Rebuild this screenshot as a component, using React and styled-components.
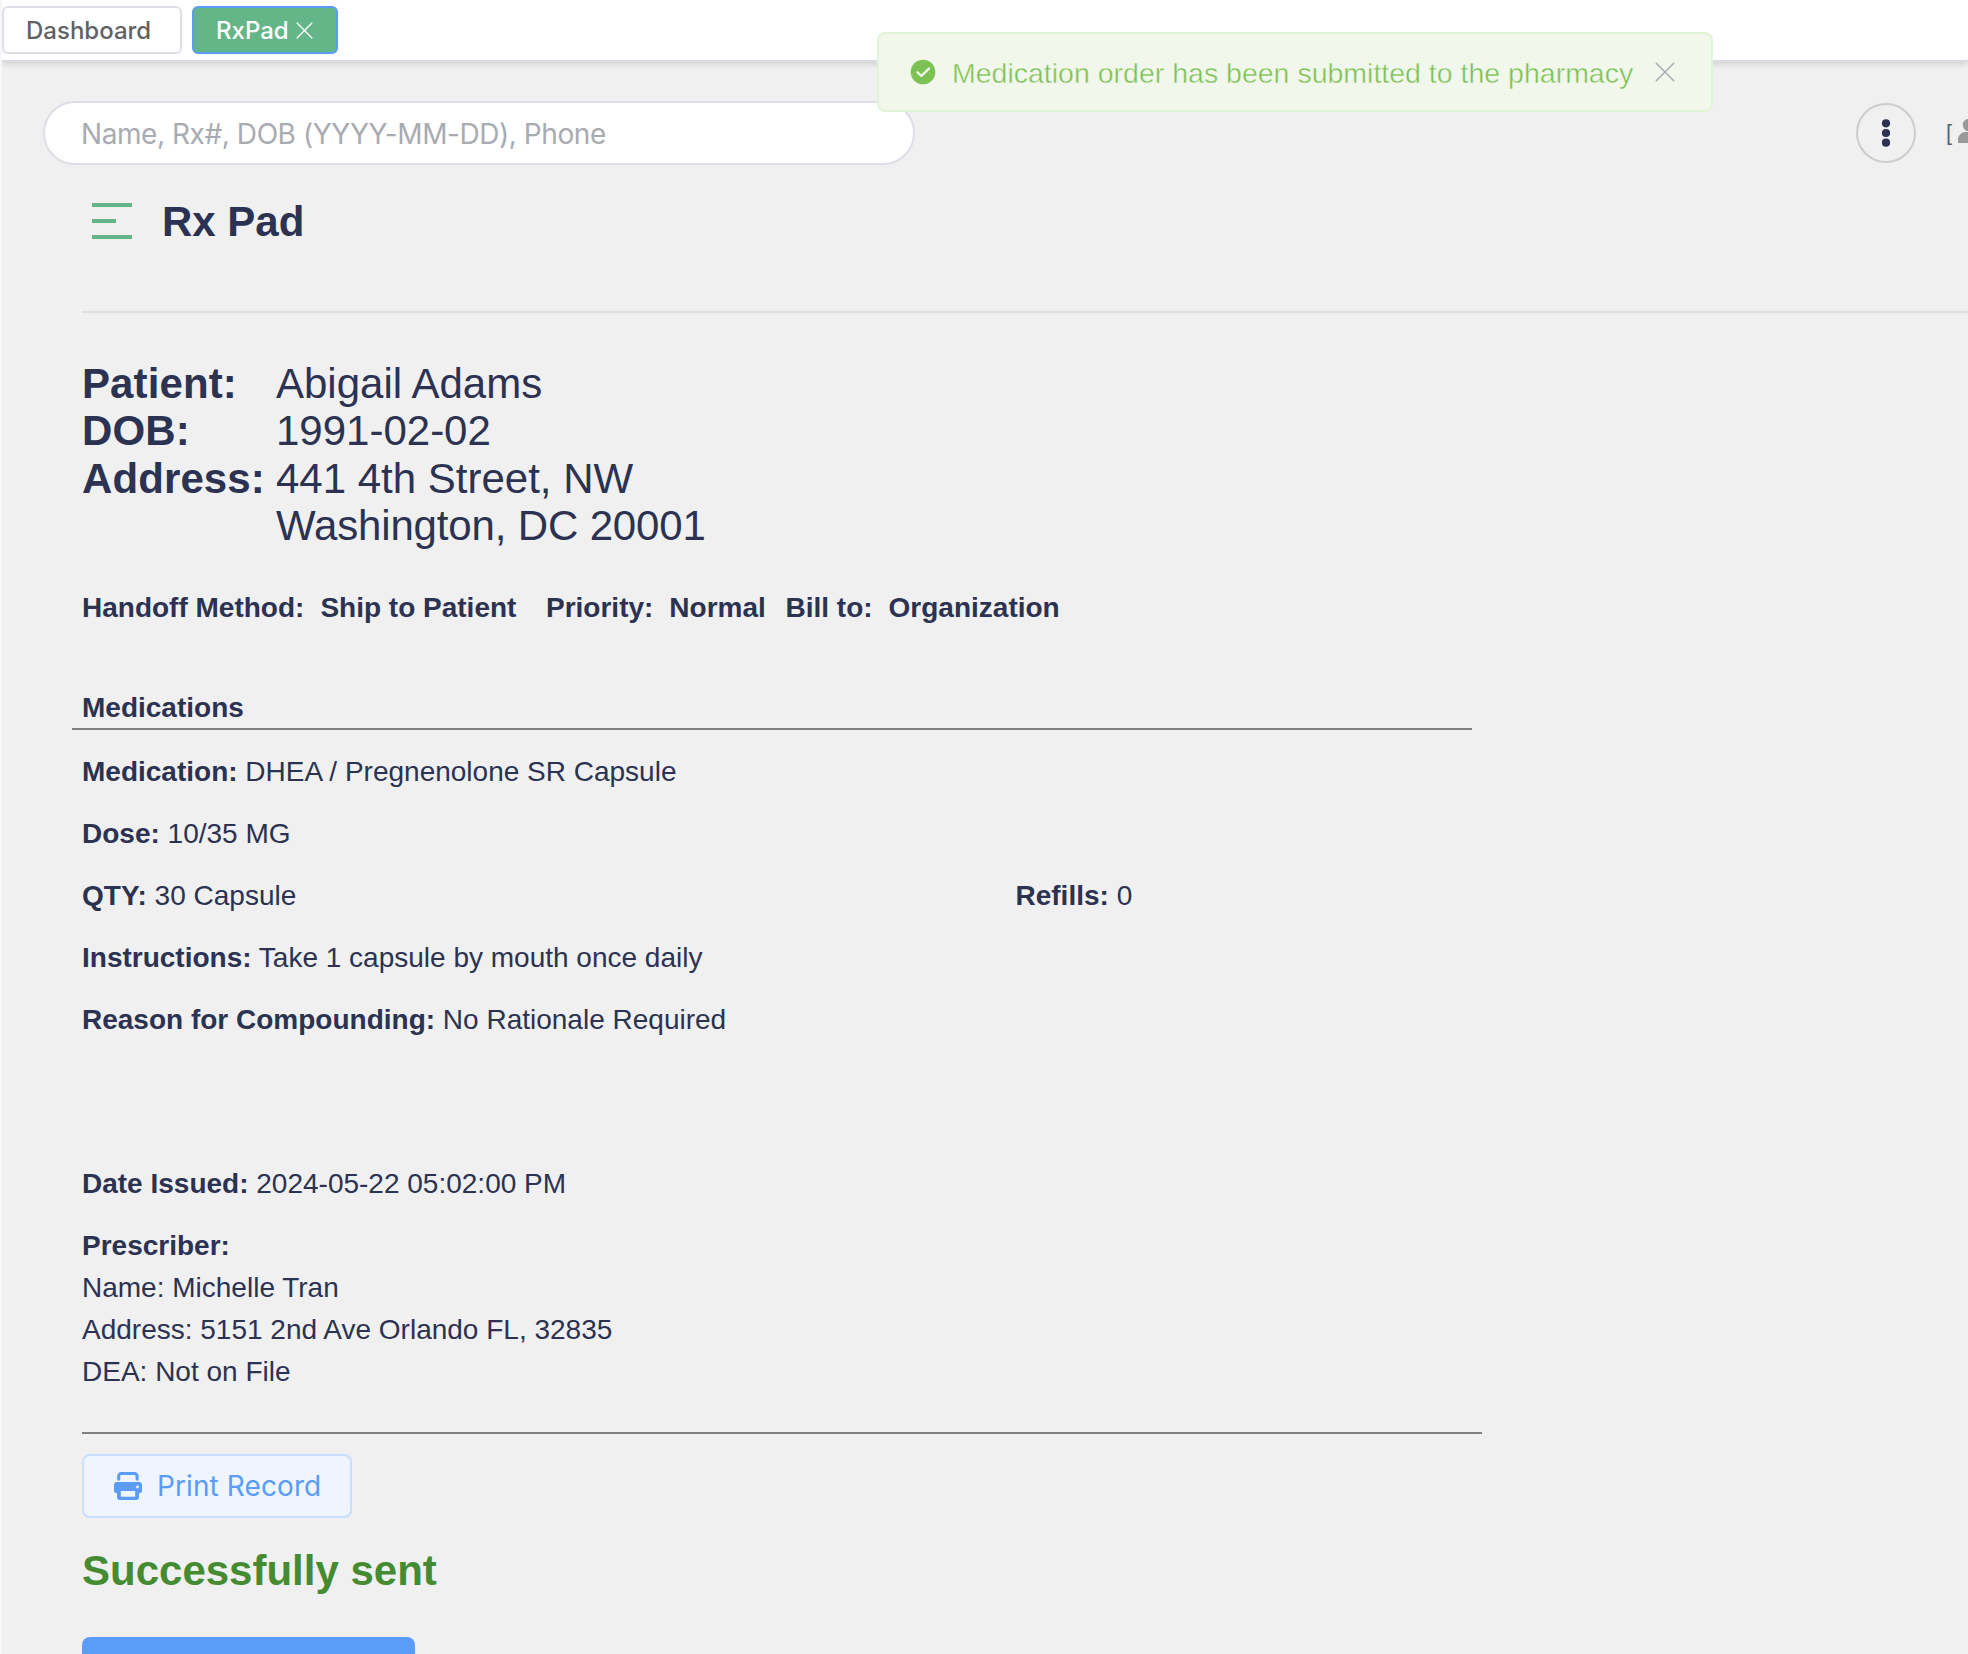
import React from "react";
import styled, { createGlobalStyle } from "styled-components";

const helvetica = `"Liberation Sans", Arial, sans-serif`;
const ui = `Inter, "Liberation Sans", sans-serif`;
const navy = "#2b3252";

const GlobalStyle = createGlobalStyle`
  *, *::before, *::after { box-sizing: border-box; }
  body { margin: 0; background: #f0f0f0; overflow: hidden; }
  h1, h2, p, dl, dd, dt { margin: 0; }
`;

const Page = styled.div`
  position: relative;
  height: 1654px;
  overflow: hidden;
  border-left: 2px solid #f7f7f7;
  background: #f0f0f0;
  color: ${navy};
  font-family: ${helvetica};
  font-size: 28px;
  line-height: 42px;
`;

const TabBar = styled.nav`
  display: flex;
  gap: 10px;
  height: 62px;
  padding-top: 6px;
  background: #fff;
  border-bottom: 2px solid #d8dce5;
  box-shadow: 0 2px 6px rgba(0, 0, 0, 0.14);
`;

const Tab = styled.button`
  display: flex;
  align-items: center;
  gap: 7px;
  width: ${(p) => p.$width}px;
  height: 48px;
  padding: 0 0 0 22px;
  border: 2px solid ${(p) => (p.$active ? "#5a9cf8" : "#dcdfe6")};
  border-radius: 6px;
  background: ${(p) => (p.$active ? "#64b587" : "#fff")};
  color: ${(p) => (p.$active ? "#fff" : "#606266")};
  font: 450 24px ${ui};
`;

const Toast = styled.div`
  position: absolute;
  z-index: 2;
  top: 32px;
  left: 875px;
  display: flex;
  align-items: center;
  width: 836px;
  height: 80px;
  padding-left: 31px;
  border: 2px solid #e1f3d8;
  border-radius: 8px;
  background: #f2f7ec;
  color: #7cc153;
`;

/* A background-coloured stroke trims the glyph stems down to a light weight. */
const ToastText = styled.span`
  width: 680px;
  margin: 0 23px 0 16px;
  padding-top: 1px;
  font-size: 28.5px;
  -webkit-text-stroke: 0.45px #f2f7ec;
  white-space: nowrap;
`;

const SearchRow = styled.div`
  display: flex;
  align-items: center;
  height: 64px;
  margin: 39px 0 0 41px;
`;

const Search = styled.input`
  flex-shrink: 0;
  width: 872px;
  height: 64px;
  padding: 1px 36px 0;
  border: 2px solid #dcdfe6;
  border-radius: 32px;
  background: #fff;
  font: 400 28px ${ui};
  letter-spacing: -0.43px;
  &::placeholder { color: #a8abb2; opacity: 1; }
`;

const MoreButton = styled.button`
  display: grid;
  flex-shrink: 0;
  place-items: center;
  width: 60px;
  height: 60px;
  margin-left: 941px;
  padding: 0;
  border: 2px solid #ccc;
  border-radius: 50%;
  background: transparent;
`;

const Account = styled.div`
  display: flex;
  align-items: center;
  gap: 6px;
  flex-shrink: 0;
  margin-left: 30px;
  color: #5a6478;
  font-size: 22px;
`;

const Header = styled.header`
  display: flex;
  align-items: center;
  gap: 30px;
  height: 148px;
  margin-left: 80px;
  padding: 0 0 34px 10px;
  border-bottom: 2px solid #dcdfe6;
`;

const Title = styled.h1`
  padding-top: 2px;
  font-size: 42px;
  line-height: 48px;
  font-weight: 700;
`;

const Content = styled.main`
  padding: 47px 0 0 80px;
`;

const Patient = styled.dl`
  display: grid;
  grid-template-columns: 194px 1fr;
  font-size: 42px;
  line-height: 47.4px;
  white-space: nowrap;
`;

const Label = styled.dt`
  font-weight: 700;
  letter-spacing: 0.1px;
`;

const Value = styled.dd`
  letter-spacing: 0;
`;

const AddressLine = styled.div`
  letter-spacing: ${(p) => p.$tracking || 0}px;
`;

const Summary = styled.div`
  display: flex;
  margin-top: 37px;
  font-weight: 700;
`;

const SummaryItem = styled.div`
  display: flex;
  gap: 16px;
  width: ${(p) => p.$width}px;
  white-space: nowrap;
`;

const SectionTitle = styled.h2`
  width: 1400px;
  height: 52px;
  margin: 49px 0 0 -10px;
  padding: 9px 0 0 10px;
  border-bottom: 2px solid #808080;
  font-size: 28px;
  line-height: 42px;
`;

const Details = styled.div`
  display: grid;
  grid-template-columns: 933.5px 1fr;
  row-gap: 20px;
  padding-top: 21px;
`;

const Field = styled.p`
  grid-column: ${(p) => (p.$half ? "auto" : "1 / -1")};
  white-space: nowrap;
`;

const Signature = styled.section`
  width: 1400px;
  height: 271px;
  margin-top: 122px;
  border-bottom: 2px solid #808080;
`;

const Prescriber = styled.div`
  padding-top: 20px;
`;

const PrintButton = styled.button`
  display: flex;
  align-items: center;
  gap: 15px;
  width: 270px;
  height: 64px;
  margin-top: 20px;
  padding: 0 0 0 30px;
  border: 2px solid #c8dffd;
  border-radius: 8px;
  background: #eef5fe;
  color: #5a9cf8;
  font: 400 28px ${ui};
  letter-spacing: 0.1px;
  white-space: nowrap;
`;

const Sent = styled.p`
  margin-top: 29px;
  color: #458b32;
  font-size: 42px;
  line-height: 48px;
  font-weight: 700;
`;

const NextButton = styled.button`
  display: block;
  width: 333px;
  height: 64px;
  margin-top: 42px;
  border: 0;
  border-radius: 8px;
  background: #5a9cf8;
`;

const Cross = ({ size, stroke }) => (
  <svg width={size} height={size} viewBox="0 0 16 16" fill="none" stroke={stroke} strokeWidth="1.2" strokeLinecap="round">
    <path d="M1 1l14 14M15 1L1 15" />
  </svg>
);

const CheckCircle = () => (
  <svg width="26" height="26" viewBox="0 0 26 26">
    <circle cx="13" cy="13" r="12.3" fill="#7cc153" />
    <path d="M7.5 13.3l3.8 3.7 7.6-7.4" fill="none" stroke="#f2f7ec" strokeWidth="2.4" strokeLinecap="round" strokeLinejoin="round" />
  </svg>
);

const MenuMark = () => (
  <svg width="40" height="36" viewBox="0 0 40 36" fill="#64b587">
    <path d="M0 0h40v4H0zM0 16h24v4H0zM0 32h40v4H0z" />
  </svg>
);

const Dots = () => (
  <svg width="10" height="28" viewBox="0 0 10 28" fill={navy}>
    <circle cx="5" cy="4.3" r="4.1" />
    <circle cx="5" cy="14" r="4.1" />
    <circle cx="5" cy="23.7" r="4.1" />
  </svg>
);

const Person = () => (
  <svg width="24" height="28" viewBox="0 0 24 28" fill="#999">
    <circle cx="11" cy="6" r="6.2" />
    <path d="M0 24v-3.5a7.5 7.5 0 0 1 7.5-7.5h7a7.5 7.5 0 0 1 7.5 7.5V24z" />
  </svg>
);

const Printer = () => (
  <svg width="28" height="28" viewBox="0 0 28 28" fill="none" stroke="#5a9cf8">
    <path d="M4.7 8.6V4.2A2.6 2.6 0 0 1 7.3 1.6h13.2a2.6 2.6 0 0 1 2.6 2.6v4.4" strokeWidth="3" />
    <path fillRule="evenodd" fill="#5a9cf8" stroke="none" d="M3 10h22a3 3 0 0 1 3 3v6a2 2 0 0 1-2 2h-1v4a3 3 0 0 1-3 3H6a3 3 0 0 1-3-3v-4H2a2 2 0 0 1-2-2v-6a3 3 0 0 1 3-3zM6.8 19v5.8h14.4V19zM23.5 13.6a1.4 1.4 0 1 0 0 2.8 1.4 1.4 0 0 0 0-2.8z" />
  </svg>
);

export default function App() {
  return (
    <Page>
      <GlobalStyle />
      <TabBar>
        <Tab $width={180}>Dashboard</Tab>
        <Tab $width={146} $active>
          RxPad
          <Cross size={17} stroke="#fff" />
        </Tab>
      </TabBar>
      <Toast>
        <CheckCircle />
        <ToastText>Medication order has been submitted to the pharmacy</ToastText>
        <Cross size={20} stroke="#a8abb2" />
      </Toast>
      <SearchRow>
        <Search placeholder="Name, Rx#, DOB (YYYY-MM-DD), Phone" />
        <MoreButton aria-label="More">
          <Dots />
        </MoreButton>
        <Account>
          [<Person />
        </Account>
      </SearchRow>
      <Header>
        <MenuMark />
        <Title>Rx Pad</Title>
      </Header>
      <Content>
        <Patient>
          <Label>Patient:</Label>
          <Value>Abigail Adams</Value>
          <Label>DOB:</Label>
          <Value>1991-02-02</Value>
          <Label>Address:</Label>
          <Value>
            <AddressLine>441 4th Street, NW</AddressLine>
            <AddressLine $tracking={-0.15}>Washington, DC 20001</AddressLine>
          </Value>
        </Patient>
        <Summary>
          <SummaryItem $width={464}><span>Handoff Method:</span><span>Ship to Patient</span></SummaryItem>
          <SummaryItem $width={239.5}><span>Priority:</span><span>Normal</span></SummaryItem>
          <SummaryItem $width={280}><span>Bill to:</span><span>Organization</span></SummaryItem>
        </Summary>
        <SectionTitle>Medications</SectionTitle>
        <Details>
          <Field><b>Medication:</b> DHEA / Pregnenolone SR Capsule</Field>
          <Field><b>Dose:</b> 10/35 MG</Field>
          <Field $half><b>QTY:</b> 30 Capsule</Field>
          <Field $half><b>Refills:</b> 0</Field>
          <Field><b>Instructions:</b> Take 1 capsule by mouth once daily</Field>
          <Field><b>Reason for Compounding:</b> No Rationale Required</Field>
        </Details>
        <Signature>
          <Field><b>Date Issued:</b> 2024-05-22 05:02:00 PM</Field>
          <Prescriber>
            <Field><b>Prescriber:</b></Field>
            <Field>Name: Michelle Tran</Field>
            <Field>Address: 5151 2nd Ave Orlando FL, 32835</Field>
            <Field>DEA: Not on File</Field>
          </Prescriber>
        </Signature>
        <PrintButton>
          <Printer />
          Print Record
        </PrintButton>
        <Sent>Successfully sent</Sent>
        <NextButton aria-label="Continue" />
      </Content>
    </Page>
  );
}
